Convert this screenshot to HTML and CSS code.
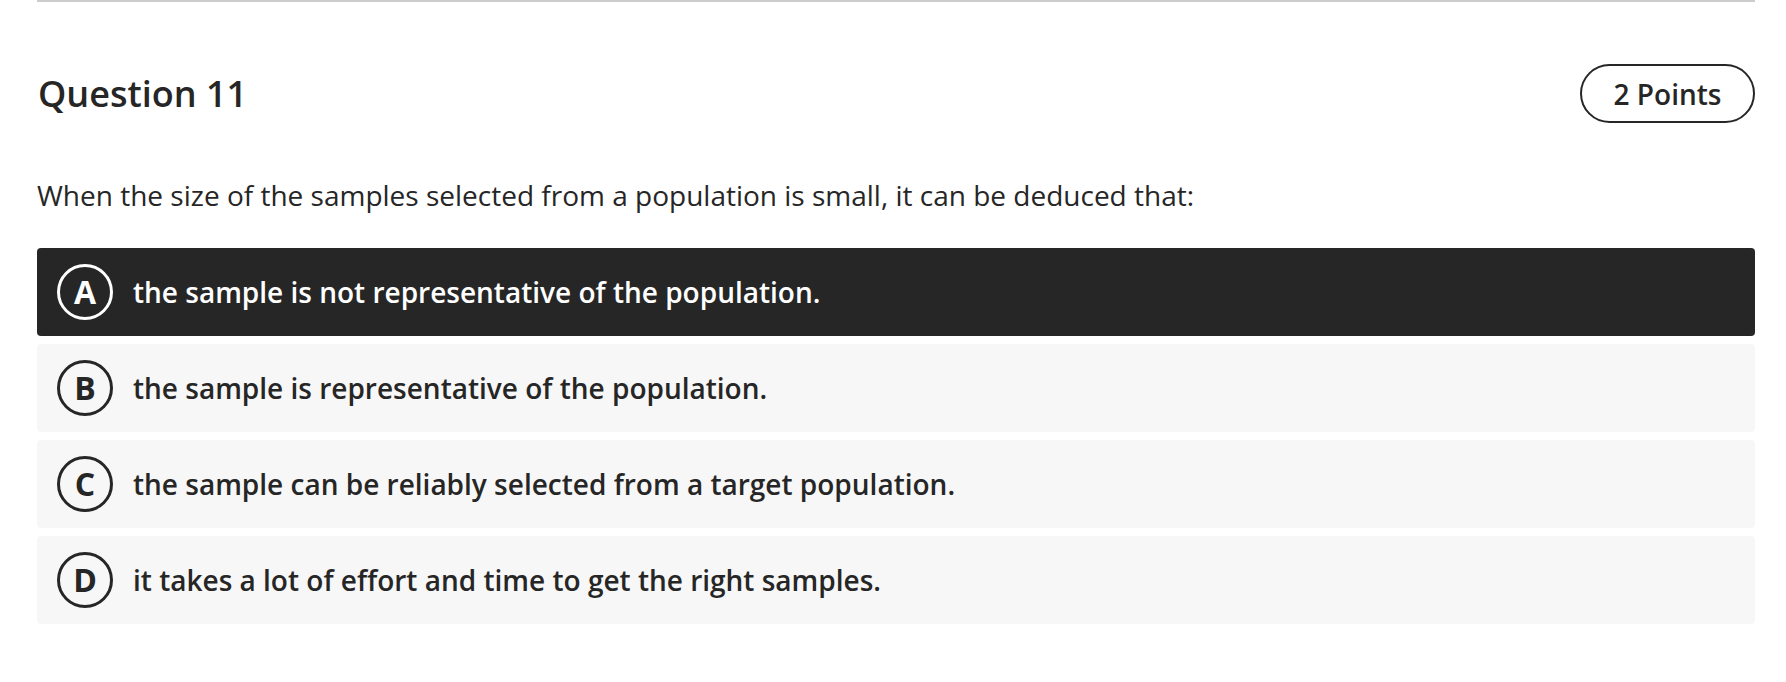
FILE: index.html
```html
<!DOCTYPE html>
<html lang="en">
<head>
<meta charset="utf-8">
<title>Question 11</title>
<link rel="stylesheet" href="styles.css">
</head>
<body>
<div class="page">
  <hr class="divider">
  <div class="header">
    <h2 class="title">Question 11</h2>
    <span class="points">2 Points</span>
  </div>
  <p class="prompt">When the size of the samples selected from a population is small, it can be deduced that:</p>
  <ul class="options">
    <li class="option selected"><span class="letter">A</span><span class="text">the sample is not representative of the population.</span></li>
    <li class="option"><span class="letter">B</span><span class="text">the sample is representative of the population.</span></li>
    <li class="option"><span class="letter">C</span><span class="text">the sample can be reliably selected from a target population.</span></li>
    <li class="option"><span class="letter">D</span><span class="text">it takes a lot of effort and time to get the right samples.</span></li>
  </ul>
</div>
</body>
</html>
```

FILE: styles.css
```css
html, body {
  margin: 0;
  padding: 0;
  background: #ffffff;
}

body {
  font-family: "Open Sans", "Noto Sans", "Liberation Sans", sans-serif;
  color: #262626;
}

.page {
  padding: 0 31px 0 37px;
}

.divider {
  margin: 0;
  border: 0;
  height: 2px;
  background: #cccccc;
}

.header {
  display: flex;
  align-items: center;
  justify-content: space-between;
  margin-top: 62px;
  height: 59px;
}

.title {
  margin: 0 0 0 1px;
  font-size: 36px;
  font-weight: 600;
  line-height: 49px;
}

.points {
  box-sizing: border-box;
  display: flex;
  align-items: center;
  justify-content: center;
  height: 59px;
  width: 175px;
  border: 2px solid #262626;
  border-radius: 30px;
  font-size: 28px;
  font-weight: 600;
  line-height: 38px;
}

.prompt {
  margin: 53px 0 0 0;
  font-size: 28px;
  font-weight: 400;
  line-height: 38px;
}

.options {
  list-style: none;
  margin: 34px 0 0 0;
  padding: 0;
  display: flex;
  flex-direction: column;
  gap: 8px;
}

.option {
  display: flex;
  align-items: center;
  height: 88px;
  padding-left: 20px;
  border-radius: 4px;
  background: #f7f7f7;
  color: #262626;
}

.option.selected {
  background: #262626;
  color: #ffffff;
}

.letter {
  box-sizing: border-box;
  display: flex;
  align-items: center;
  justify-content: center;
  width: 56px;
  height: 56px;
  border: 3.5px solid currentColor;
  border-radius: 50%;
  font-size: 32px;
  font-weight: 700;
  line-height: 1;
  flex-shrink: 0;
}

.text {
  margin-left: 20px;
  font-size: 28px;
  font-weight: 600;
  line-height: 38px;
}
```
